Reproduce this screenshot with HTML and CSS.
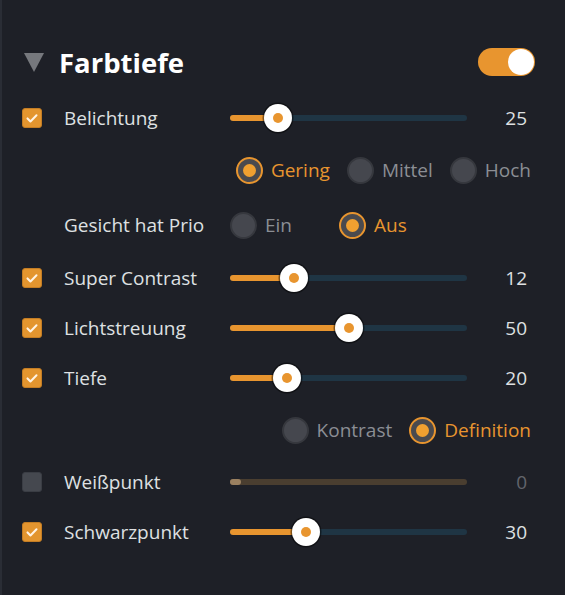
FILE: index.html
```html
<!DOCTYPE html>
<html lang="de">
<head>
<meta charset="utf-8">
<title>Farbtiefe</title>
<link rel="stylesheet" href="styles.css">
</head>
<body>
<div class="panel">
  <div class="title-row">
    <span class="caret"></span>
    <h1 class="title">Farbtiefe</h1>
    <span class="toggle"><span class="knob"></span></span>
  </div>

  <div class="row">
    <span class="check on"><svg viewBox="0 0 20 20"><path d="M5 10.5l3.3 3.3L15 7" /></svg></span>
    <span class="label">Belichtung</span>
    <div class="slider"><div class="fill" style="width:20.3%"></div><div class="thumb" style="left:20.3%"></div></div>
    <span class="value">25</span>
  </div>

  <div class="radio-row">
    <span class="opt sel"><span class="radio"></span>Gering</span>
    <span class="opt"><span class="radio"></span>Mittel</span>
    <span class="opt"><span class="radio"></span>Hoch</span>
  </div>

  <div class="row prio">
    <span></span>
    <span class="label">Gesicht hat Prio</span>
    <div class="prio-opts">
      <span class="opt"><span class="radio"></span>Ein</span>
      <span class="opt sel"><span class="radio"></span>Aus</span>
    </div>
  </div>

  <div class="row">
    <span class="check on"><svg viewBox="0 0 20 20"><path d="M5 10.5l3.3 3.3L15 7" /></svg></span>
    <span class="label">Super Contrast</span>
    <div class="slider"><div class="fill" style="width:27%"></div><div class="thumb" style="left:27%"></div></div>
    <span class="value">12</span>
  </div>

  <div class="row">
    <span class="check on"><svg viewBox="0 0 20 20"><path d="M5 10.5l3.3 3.3L15 7" /></svg></span>
    <span class="label">Lichtstreuung</span>
    <div class="slider"><div class="fill" style="width:50%"></div><div class="thumb" style="left:50%"></div></div>
    <span class="value">50</span>
  </div>

  <div class="row">
    <span class="check on"><svg viewBox="0 0 20 20"><path d="M5 10.5l3.3 3.3L15 7" /></svg></span>
    <span class="label">Tiefe</span>
    <div class="slider"><div class="fill" style="width:24%"></div><div class="thumb" style="left:24%"></div></div>
    <span class="value">20</span>
  </div>

  <div class="radio-row">
    <span class="opt"><span class="radio"></span>Kontrast</span>
    <span class="opt sel"><span class="radio"></span>Definition</span>
  </div>

  <div class="row">
    <span class="check"></span>
    <span class="label">Weißpunkt</span>
    <div class="slider off"><div class="fill" style="width:11px"></div></div>
    <span class="value dim">0</span>
  </div>

  <div class="row">
    <span class="check on"><svg viewBox="0 0 20 20"><path d="M5 10.5l3.3 3.3L15 7" /></svg></span>
    <span class="label">Schwarzpunkt</span>
    <div class="slider"><div class="fill" style="width:32%"></div><div class="thumb" style="left:32%"></div></div>
    <span class="value">30</span>
  </div>
</div>
</body>
</html>
```

FILE: styles.css
```css
html, body {
  margin: 0;
  padding: 0;
  background: #1e2027;
}
body {
  width: 565px;
  height: 595px;
  overflow: hidden;
  font-family: "Open Sans", "Noto Sans", "DejaVu Sans", sans-serif;
  color: #dfe0e2;
}
.panel {
  box-sizing: border-box;
  height: 595px;
  border-left: 2px solid #2a2d35;
  padding: 31px 0 0 20px;
}
.title-row {
  height: 62px;
  display: flex;
  align-items: center;
  padding-right: 30px;
}
.caret {
  width: 0;
  height: 0;
  margin-left: 2px;
  border-left: 10.5px solid transparent;
  border-right: 10.5px solid transparent;
  border-top: 19px solid #76787d;
}
.title {
  margin: 0 0 0 15px;
  font-size: 27.5px;
  font-weight: 700;
  color: #ffffff;
  flex: 1;
}
.toggle {
  width: 57px;
  height: 28px;
  border-radius: 14px;
  background: #e8952f;
  display: flex;
  justify-content: flex-end;
  align-items: center;
  padding-right: 1px;
  box-sizing: border-box;
}
.knob {
  width: 26px;
  height: 26px;
  border-radius: 50%;
  background: #ffffff;
}
.row {
  height: 50px;
  display: grid;
  grid-template-columns: 20px 188px 237px 60px;
  align-items: center;
}
.row.prio {
  height: 56px;
}
.check {
  box-sizing: border-box;
  width: 20px;
  height: 20px;
  border-radius: 3px;
  background: #45484f;
  border: 1px solid #3a3d44;
  display: flex;
}
.check.on {
  background: #e3952f;
  border-color: #c47d24;
}
.check svg {
  width: 18px;
  height: 18px;
  fill: none;
  stroke: #fff3e4;
  stroke-width: 2.3;
  stroke-linecap: round;
  stroke-linejoin: round;
}
.label {
  padding-left: 22px;
  font-size: 19px;
  white-space: nowrap;
}
.value {
  text-align: right;
  font-size: 19px;
}
.value.dim {
  color: #62656c;
}
.slider {
  position: relative;
  height: 6px;
  border-radius: 3px;
  background: #1f3544;
}
.slider .fill {
  height: 6px;
  border-radius: 3px;
  background: #e8952f;
}
.slider.off {
  background: #4a3e30;
}
.slider.off .fill {
  background: #9a8060;
}
.thumb {
  position: absolute;
  top: 3px;
  width: 28px;
  height: 28px;
  margin: -14px 0 0 -14px;
  box-sizing: border-box;
  border-radius: 50%;
  background: #ffffff;
  box-shadow: 0 0 0 1.5px rgba(0, 0, 0, 0.45);
  display: flex;
  align-items: center;
  justify-content: center;
}
.thumb::after {
  content: "";
  width: 10px;
  height: 10px;
  border-radius: 50%;
  background: #e8952f;
}
.radio-row {
  height: 54px;
  display: flex;
  justify-content: flex-end;
  align-items: center;
  gap: 17px;
  padding-right: 34px;
}
.prio-opts {
  display: flex;
  align-items: center;
  gap: 47px;
}
.opt {
  display: flex;
  align-items: center;
  gap: 8px;
  font-size: 19px;
  color: #8b8e94;
}
.opt.sel {
  color: #e8952f;
}
.radio {
  box-sizing: border-box;
  width: 27px;
  height: 27px;
  border-radius: 50%;
  background: #45474e;
  border: 2px solid #36383e;
  display: flex;
  align-items: center;
  justify-content: center;
}
.opt.sel .radio {
  border-color: #e8952f;
  background: #4a4a4e;
}
.opt.sel .radio::after {
  content: "";
  width: 13px;
  height: 13px;
  border-radius: 50%;
  background: #f0a030;
}
```
